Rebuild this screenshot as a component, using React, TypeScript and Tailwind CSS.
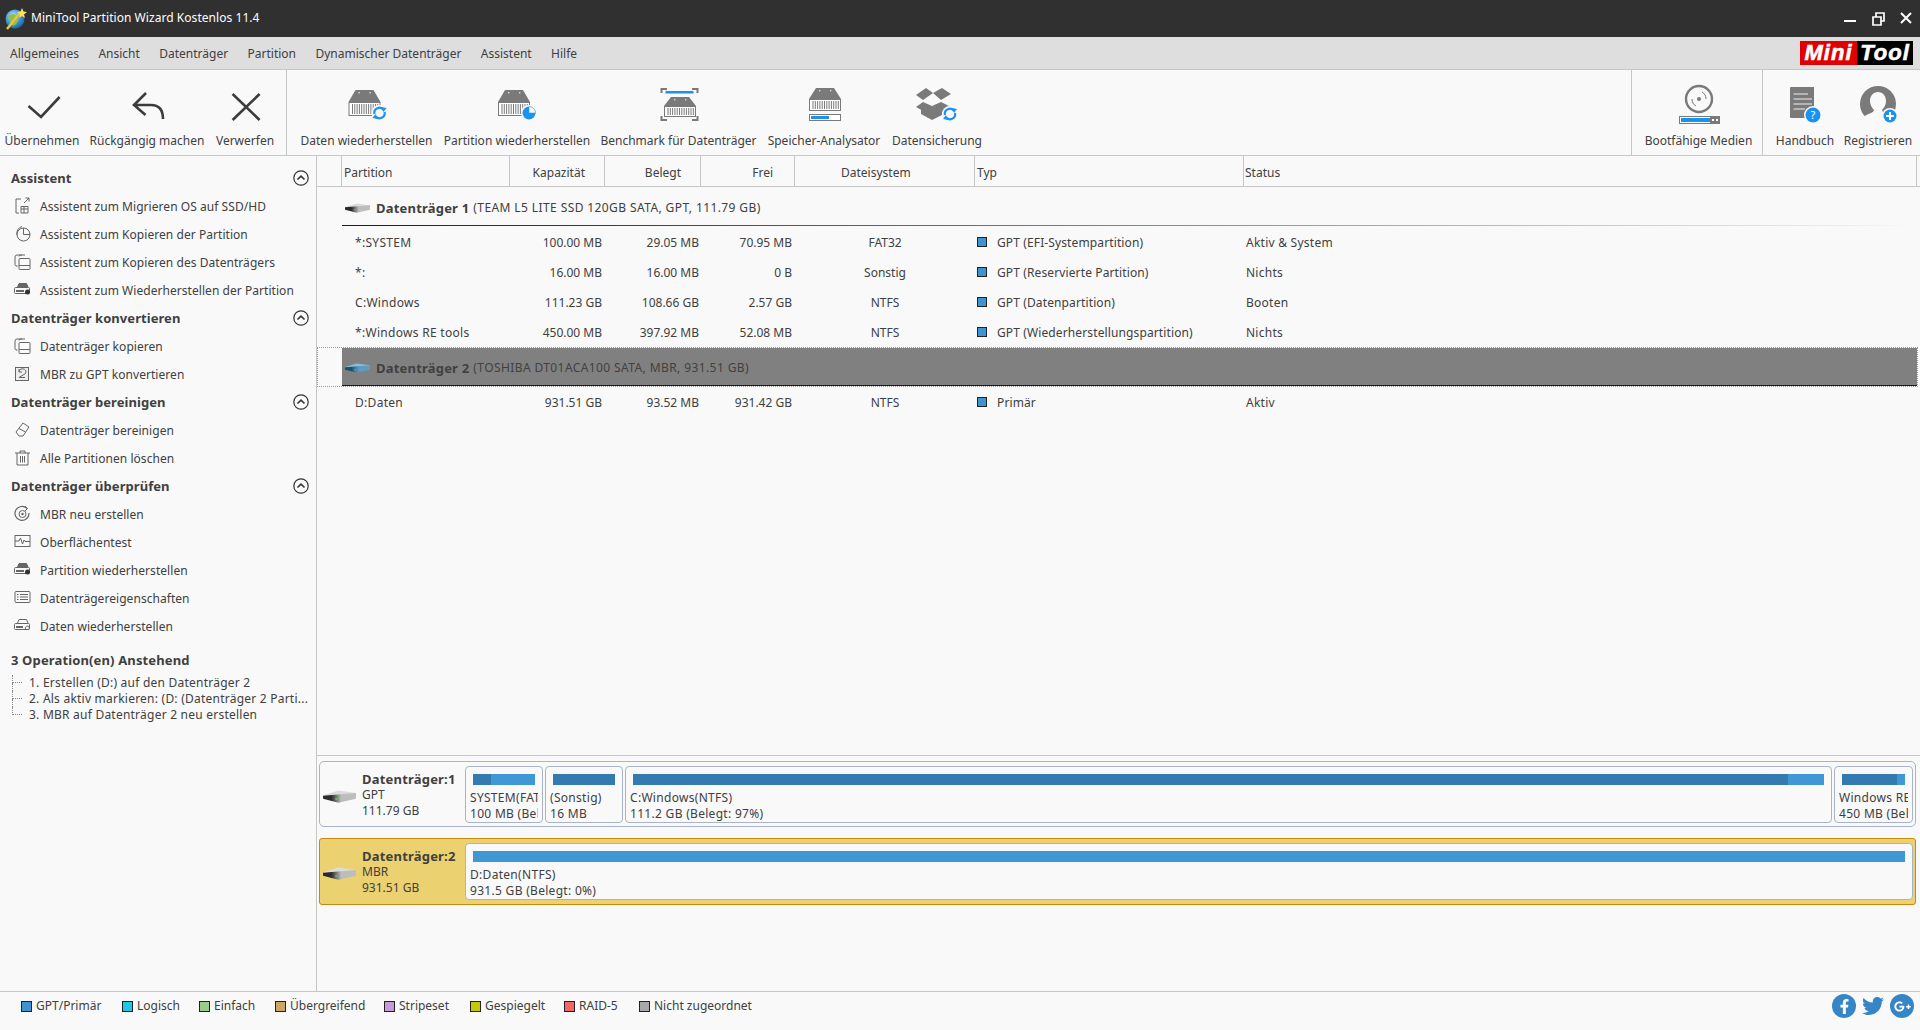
import React from "react";
import { FaFacebookF, FaTwitter, FaGooglePlusG } from "react-icons/fa";

const G = "#7a7a7a";
const BLUE = "#1a93f0";

function Hdd({ x, y, h = 26 }: { x: number; y: number; h?: number }) {
  const top = Math.round(h * 0.46);
  const slats = [];
  for (let i = 0; i < 12; i++) slats.push(<rect key={i} x={3.5 + i * 2.3} y={top + 2} width={1} height={h - top - 4} fill={G} />);
  return (
    <g transform={`translate(${x} ${y})`}>
      <path d={`M7 0H25L32 ${top}H0Z`} fill={G} />
      <rect x={10} y={2} width={1.4} height={1.4} fill="#ddd" />
      <rect x={21} y={2} width={1.4} height={1.4} fill="#ddd" />
      <rect x={0.5} y={top + 0.5} width={31} height={h - top - 1} fill="#fff" stroke={G} />
      {slats}
    </g>
  );
}

function Refresh({ cx, cy }: { cx: number; cy: number }) {
  return (
    <g transform={`translate(${cx} ${cy})`}>
      <circle r={8} fill="#f9f9f9" />
      <path d="M-5 1A5 5 0 0 1 4-3" fill="none" stroke={BLUE} strokeWidth={2.2} />
      <path d="M5 -1A5 5 0 0 1 -4 3" fill="none" stroke={BLUE} strokeWidth={2.2} />
      <path d="M2-6L7-5 4-1Z" fill={BLUE} />
      <path d="M-2 6L-7 5-4 1Z" fill={BLUE} />
    </g>
  );
}

const toolbarIcons: Record<string, React.ReactNode> = {
  check: <polyline points="10.5,20 23,31 41.6,11" fill="none" stroke="#3c3c3c" strokeWidth={2.6} />,
  undo: <path d="M23 7L11 19 22.5 29M11 19H28Q40 19 40 33" fill="none" stroke="#3c3c3c" strokeWidth={2.6} />,
  x: <path d="M11.6 8L38.6 34M38.6 8L11.6 34" stroke="#3c3c3c" strokeWidth={2.6} />,
  data: (<><Hdd x={5.5} y={4} /><Refresh cx={36.5} cy={27} /></>),
  part: (
    <>
      <Hdd x={5} y={4} />
      <circle cx={36} cy={27} r={8} fill="#f9f9f9" />
      <circle cx={36} cy={27} r={6.5} fill={BLUE} />
      <path d="M36 27V20.5A6.5 6.5 0 0 1 42.5 27Z" fill="#f9f9f9" stroke={BLUE} strokeWidth={0.5} />
    </>
  ),
  bench: (
    <>
      <path d="M6.5 7V3H12M37 3H42.5V7M6.5 30V34H12M37 34H42.5V30" fill="none" stroke={G} strokeWidth={2} />
      <rect x={10.5} y={5} width={28} height={2.5} fill={BLUE} />
      <Hdd x={9} y={11} h={20} />
    </>
  ),
  mem: (
    <>
      <Hdd x={9} y={2} h={23} />
      <rect x={9.5} y={28.5} width={31} height={6} fill="#fff" stroke={G} />
      <rect x={11} y={30} width={18} height={3} fill={BLUE} />
    </>
  ),
  box: (
    <>
      <path d="M3 9L13 2 20 7 10 14ZM20 7L29 2 38 8 28 14ZM10 16L3 21 12 26 19 20ZM19 20L30 26 36 20 28 16Z" fill={G} />
      <path d="M10 24L19 28 19 20 ZM8 24V28L19 34 29 29V24L19 20Z" fill={G} />
      <Refresh cx={37} cy={28} />
    </>
  ),
  disc: (
    <>
      <circle cx={24} cy={13} r={13} fill="none" stroke={G} strokeWidth={2.4} />
      <circle cx={24} cy={13} r={2} fill={G} />
      <path d="M27 6A8 8 0 0 1 31 13M21 20A8 8 0 0 1 17 13" fill="none" stroke={G} />
      <rect x={4.5} y={30.5} width={40} height={7} fill="#fff" stroke={G} />
      <rect x={6} y={32} width={29} height={4} fill={BLUE} />
      <rect x={35} y={31} width={9} height={6} fill={G} />
      <rect x={37} y={33} width={2} height={2} fill="#fff" />
      <rect x={41} y={33} width={2} height={2} fill="#fff" />
    </>
  ),
  book: (
    <>
      <path d="M10 1H33V32H10A1 1 0 0 1 9 31V2A1 1 0 0 1 10 1Z" fill={G} />
      <path d="M12.5 8H27M12.5 13H31M12.5 18H31M12.5 23H24" stroke="#eee" strokeWidth={1} />
      <circle cx={32} cy={29} r={9} fill="#f9f9f9" />
      <circle cx={32} cy={29} r={7.5} fill={BLUE} />
      <text x={32} y={33} textAnchor="middle" fontSize={11} fill="#fff" fontFamily="Noto Sans, sans-serif">?</text>
    </>
  ),
  user: (
    <>
      <circle cx={24} cy={18} r={18} fill={G} />
      <path d="M24 6C19 6 16 10 16 15 16 19 18 22 20 24 20 27 12 28 10 31A18 18 0 0 0 38 31C36 28 28 27 28 24 30 22 32 19 32 15 32 10 29 6 24 6Z" fill="#f9f9f9" />
      <circle cx={36} cy={30} r={8} fill="#f9f9f9" />
      <circle cx={36} cy={30} r={6.5} fill={BLUE} />
      <path d="M32 30H40M36 26V34" stroke="#fff" strokeWidth={2} />
    </>
  ),
};

function ToolButton({ icon, label, w }: { icon: string; label: string; w: string }) {
  return (
    <div className={`flex flex-col items-center pt-[16px] ${w}`}>
      <svg width={48} height={36} viewBox="0 0 48 36" className="overflow-visible">{toolbarIcons[icon]}</svg>
      <div className="mt-[11px] h-[16px] whitespace-nowrap">{label}</div>
    </div>
  );
}

const S = "#666";
const sideIcons: Record<string, React.ReactNode> = {
  migrate: (
    <>
      <path d="M7 2H2V16H5" fill="none" stroke={S} />
      <path d="M7 9.5H14V16H7Z M7 12H14 M10 9.5V16" fill="none" stroke={S} />
      <path d="M10 6L15 1M11.5 1H15V4.5" fill="none" stroke={S} />
    </>
  ),
  copyPart: (
    <>
      <circle cx={9.5} cy={9.5} r={6.5} fill="none" stroke={S} />
      <path d="M9.5 9.5V3M9.5 9.5H16" fill="none" stroke={S} />
      <path d="M3 10A7 7 0 0 1 8 1.5" fill="none" stroke={S} />
    </>
  ),
  copyDisk: (
    <>
      <path d="M5 3.5A1.5 1.5 0 0 1 6.5 2H11M2 13H3.5M1 4V11.5Q1 13 2.5 13" fill="none" stroke={S} />
      <path d="M1 4Q1 2 3 2H8" fill="none" stroke={S} />
      <rect x={5} y={5.5} width={11} height={11} rx={1} fill="#f9f9f9" stroke={S} />
      <path d="M5 12.5H16" stroke={S} />
    </>
  ),
  restore: (
    <>
      <path d="M3.5 6L5 2.5H12.5L14 6" fill={S} stroke={S} />
      <rect x={0.5} y={6.5} width={15} height={6} rx={1} fill="#f9f9f9" stroke={S} />
      <rect x={2} y={9} width={8} height={2} fill={S} />
      <circle cx={13.5} cy={11} r={2.5} fill="#333" />
    </>
  ),
  mbr: (
    <>
      <rect x={1.5} y={2.5} width={13} height={13} fill="#eee" stroke={S} />
      <path d="M5 6.5A3.5 3 0 1 1 10 9.5L5 12.5H11M5 4V7H8" fill="none" stroke={S} />
    </>
  ),
  eraser: <path d="M2 11L9 2 15 6 9 15H5ZM5 7.5L11.5 11" fill="none" stroke={S} />,
  trash: (
    <>
      <path d="M1 4H16M6 4V2H11V4" fill="none" stroke={S} />
      <path d="M3 4V16H14V4M6.5 7V13.5M8.5 7V13.5M10.5 7V13.5" fill="none" stroke={S} />
    </>
  ),
  target: (
    <>
      <path d="M13 3.5A7 7 0 1 0 15 8" fill="none" stroke={S} strokeWidth={1.2} />
      <circle cx={8.5} cy={9} r={3.5} fill="none" stroke={S} />
      <circle cx={8.5} cy={9} r={1.2} fill={S} />
      <path d="M11 1L13.5 3.5 11 6" fill="none" stroke={S} />
    </>
  ),
  surface: (
    <>
      <rect x={1} y={2.5} width={15} height={11} fill="none" stroke={S} />
      <path d="M1 8H5L6.5 5 8.5 11 10 7 11 8.5H16" fill="none" stroke={S} />
    </>
  ),
  props: (
    <>
      <rect x={1} y={2.5} width={15} height={11} rx={1} fill="none" stroke={S} />
      <path d="M3 5.5H4.5M6 5.5H14M3 8H4.5M6 8H14M3 10.5H4.5M6 10.5H14" stroke={S} />
    </>
  ),
  dataRec: (
    <>
      <path d="M3.5 6L5 2.5H12.5L14 6" fill="none" stroke={S} />
      <rect x={0.5} y={6.5} width={15} height={6} rx={1} fill="#f9f9f9" stroke={S} />
      <rect x={2} y={9} width={7} height={2} fill={S} />
      <path d="M11.5 12A2 2 0 1 1 14 13" fill="none" stroke={S} />
    </>
  ),
};

function SideItem({ icon, label }: { icon: string; label: string }) {
  return (
    <div className="flex h-[28px] items-center">
      <svg width={17} height={18} viewBox="0 0 17 18" className="ml-[14px] mr-[9px] shrink-0">{sideIcons[icon]}</svg>
      <span className="whitespace-nowrap pt-[2px] tracking-[0.05px]">{label}</span>
    </div>
  );
}

function SideHead({ label }: { label: string }) {
  return (
    <div className="flex h-[28px] items-center justify-between pl-[11px] pr-[7px]">
      <span className="text-[13px] font-bold tracking-[0.06px]">{label}</span>
      <svg width={16} height={16} viewBox="0 0 16 16">
        <circle cx={8} cy={8} r={7.2} fill="none" stroke="#333" strokeWidth={1.2} />
        <path d="M4.5 9.5L8 6.2 11.5 9.5" fill="none" stroke="#333" strokeWidth={1.6} />
      </svg>
    </div>
  );
}

const COLS = "grid grid-cols-[25px_168px_95px_96px_94px_180px_269px_673px]";

function DiskGlyph({ w, blue }: { w: number; blue?: boolean }) {
  const top = blue ? "#8fbbdb" : "#dcdcdc";
  const a = blue ? "#1d4f70" : "#2a2a2a";
  const b = blue ? "#5d9ac4" : "#bdbdbd";
  const id = blue ? "dgb" : "dgg";
  return (
    <svg width={w} height={w * 0.39} viewBox="0 0 32 12.5">
      <defs>
        <linearGradient id={id} x1="0" x2="1" y1="0" y2="0">
          <stop offset="0.25" stopColor={a} />
          <stop offset="0.55" stopColor={b} />
          <stop offset="1" stopColor={b} />
        </linearGradient>
      </defs>
      <path d="M0 5L15 0.5 32 3V5L0 7Z" fill={top} />
      <path d="M0 5.5L32 3V8.5L15 12.5 0 8.5Z" fill={`url(#${id})`} />
      <rect x={12} y={8} width={1.5} height={1.5} fill="#5fd45f" />
    </svg>
  );
}

function DiskHeader({ name, info, selected }: { name: string; info: string; selected?: boolean }) {
  return (
    <div className={selected ? "flex h-[40px] flex-col border border-dotted border-[#e8893a]" : "flex h-[40px] flex-col"}>
      <div className={selected ? "ml-[24px] flex h-full flex-col bg-[#808080]" : "ml-[25px] flex h-full flex-col"}>
        <div className={selected ? "flex flex-1 items-center pl-[3px] pt-[2px]" : "flex flex-1 items-center pl-[3px] pt-[4px]"}>
          <DiskGlyph w={25} blue={selected} />
          <span className="ml-[6px] text-[13px] font-bold tracking-[0.2px]">{name}</span>
          <span className="ml-[4px] whitespace-pre tracking-[0.4px]">{info}</span>
        </div>
        {selected ? (
          <div className="h-px bg-[#14145a]" />
        ) : (
          <div className="mb-px h-px bg-linear-to-r from-[#14145a] to-[#f9f9f9]" />
        )}
      </div>
    </div>
  );
}

function PartRow({ r }: { r: string[] }) {
  return (
    <div className={`${COLS} h-[30px] items-center`}>
      <div />
      <div className="pl-[13px] pt-[2px] tracking-[0.3px]">{r[0]}</div>
      <div className="pr-[3px] pt-[2px] text-right">{r[1]}</div>
      <div className="pr-[2px] pt-[2px] text-right">{r[2]}</div>
      <div className="pr-[3px] pt-[2px] text-right">{r[3]}</div>
      <div className="pt-[2px] text-center">{r[4]}</div>
      <div className="flex items-center pl-[2px]">
        <span className="mr-[10px] h-[10px] w-[10px] border border-[#222] bg-[#3d94d1]" />
        <span className="pt-[2px] tracking-[0.12px]">{r[5]}</span>
      </div>
      <div className="pl-[2px] pt-[2px] tracking-[0.25px]">{r[6]}</div>
    </div>
  );
}

function Block({ a, b, used, w }: { a: string; b: string; used: string; w: string }) {
  return (
    <div className={`flex h-[57px] flex-col rounded-[4px] border border-[#a9b4c8] bg-[#f9f9f9] ${w}`}>
      <div className="mx-[7px] mt-[7px] h-[11px] shrink-0 bg-[#3f98d3]">
        <div className={`h-full bg-[#337ab0] ${used}`} />
      </div>
      <div className="mx-[4px] mt-[5px] overflow-hidden whitespace-nowrap tracking-[0.3px]">
        <div className="h-[16px]">{a}</div>
        <div className="h-[16px]">{b}</div>
      </div>
    </div>
  );
}

function DiskLabel({ a, b, c }: { a: string; b: string; c: string }) {
  return (
    <div className="flex w-[145px] shrink-0 self-stretch">
      <div className="ml-[3px] mt-[28px] w-[39px] shrink-0"><DiskGlyph w={33} /></div>
      <div className="mt-[9px]">
        <div className="h-[16px] text-[13px] font-bold tracking-[0.2px] whitespace-nowrap">{a}</div>
        <div className="h-[16px]">{b}</div>
        <div className="h-[16px]">{c}</div>
      </div>
    </div>
  );
}

const legend: [string, string, string][] = [
  ["GPT/Primär", "bg-[#3d94d1]", "w-[101px]"],
  ["Logisch", "bg-[#22c5e8]", "w-[77px]"],
  ["Einfach", "bg-[#9ccc8a]", "w-[76px]"],
  ["Übergreifend", "bg-[#cda862]", "w-[109px]"],
  ["Stripeset", "bg-[#c79ad8]", "w-[86px]"],
  ["Gespiegelt", "bg-[#c8c800]", "w-[94px]"],
  ["RAID-5", "bg-[#f56565]", "w-[75px]"],
  ["Nicht zugeordnet", "bg-[#a8a8a8]", "w-[130px]"],
];

export default function App() {
  return (
    <div className="flex h-[1030px] w-[1920px] flex-col overflow-hidden bg-[#f9f9f9] text-[12px] leading-4 text-[#404040] [font-family:'Noto_Sans',sans-serif]">
      {/* title bar */}
      <div className="flex h-[37px] shrink-0 items-center justify-between bg-[#303030] text-white">
        <div className="flex items-center pl-[5px]">
          <svg width={23} height={23} viewBox="0 0 23 23">
            <defs>
              <radialGradient id="globe" cx="0.4" cy="0.35" r="0.7">
                <stop offset="0" stopColor="#bfe3ff" />
                <stop offset="0.6" stopColor="#3b8fd8" />
                <stop offset="1" stopColor="#1c5f9e" />
              </radialGradient>
            </defs>
            <circle cx={10} cy={12} r={9.5} fill="url(#globe)" />
            <path d="M3 9Q8 5 12 9T9 19Q5 18 3 9Z" fill="#8cc152" />
            <path d="M2 22L15 6" stroke="#f2c230" strokeWidth={2.4} />
            <path d="M17 1L18.5 4.5 22 5 19 7.5 20 11 17 9 14 11 15 7.5 12 5 15.5 4.5Z" fill="#ffe25a" />
          </svg>
          <span className="mb-[2px] ml-[3px] tracking-[0.05px]">MiniTool Partition Wizard Kostenlos 11.4</span>
        </div>
        <div className="flex items-center pr-[6px]">
          <svg width={70} height={16} viewBox="0 0 70 16" fill="none" stroke="#fff" strokeWidth={2}>
            <path d="M0 10H12" />
            <path d="M29 6H37V14H29ZM32 6V2H40V10H37" strokeWidth={1.7} />
            <path d="M57 2L67 12M67 2L57 12" />
          </svg>
        </div>
      </div>

      {/* menu */}
      <div className="flex h-[33px] shrink-0 items-center justify-between border-b border-[#c6c6c6] bg-[#dedede]">
        <div className="flex gap-[19.4px] pl-[10px] pt-[2px]">
          {["Allgemeines", "Ansicht", "Datenträger", "Partition", "Dynamischer Datenträger", "Assistent", "Hilfe"].map((m) => (
            <span key={m} className="whitespace-nowrap">{m}</span>
          ))}
        </div>
        <div className="mr-[7px] flex h-[24px] w-[113px] text-[22px] font-bold italic leading-[24px] tracking-[1px] text-white [-webkit-text-stroke:0.6px_white] [font-family:'Liberation_Sans',sans-serif]">
          <span className="w-[57px] bg-[#e00000] text-center">Mini</span>
          <span className="w-[56px] bg-black text-center">Tool</span>
        </div>
      </div>

      {/* toolbar */}
      <div className="flex h-[86px] shrink-0 border-b border-[#c6c6c6]">
        <div className="flex w-[287px] border-r border-[#c6c6c6]">
          <ToolButton icon="check" label="Übernehmen" w="w-[84px]" />
          <ToolButton icon="undo" label="Rückgängig machen" w="w-[126px]" />
          <ToolButton icon="x" label="Verwerfen" w="w-[70px]" />
        </div>
        <div className="flex flex-1 pl-[8px]">
          <ToolButton icon="data" label="Daten wiederherstellen" w="w-[143px]" />
          <ToolButton icon="part" label="Partition wiederherstellen" w="w-[158px]" />
          <ToolButton icon="bench" label="Benchmark für Datenträger" w="w-[165px]" />
          <ToolButton icon="mem" label="Speicher-Analysator" w="w-[126px]" />
          <ToolButton icon="box" label="Datensicherung" w="w-[100px]" />
        </div>
        <div className="flex w-[132px] justify-center border-x border-[#c6c6c6] pl-[3px]">
          <ToolButton icon="disc" label="Bootfähige Medien" w="w-[128px]" />
        </div>
        <div className="flex w-[157px]">
          <ToolButton icon="book" label="Handbuch" w="w-[84px]" />
          <ToolButton icon="user" label="Registrieren" w="w-[62px]" />
        </div>
      </div>

      {/* main */}
      <div className="flex min-h-0 flex-1">
        <aside className="w-[317px] shrink-0 border-r border-[#c6c6c6] pt-[8px]">
          <SideHead label="Assistent" />
          <SideItem icon="migrate" label="Assistent zum Migrieren OS auf SSD/HD" />
          <SideItem icon="copyPart" label="Assistent zum Kopieren der Partition" />
          <SideItem icon="copyDisk" label="Assistent zum Kopieren des Datenträgers" />
          <SideItem icon="restore" label="Assistent zum Wiederherstellen der Partition" />
          <SideHead label="Datenträger konvertieren" />
          <SideItem icon="copyDisk" label="Datenträger kopieren" />
          <SideItem icon="mbr" label="MBR zu GPT konvertieren" />
          <SideHead label="Datenträger bereinigen" />
          <SideItem icon="eraser" label="Datenträger bereinigen" />
          <SideItem icon="trash" label="Alle Partitionen löschen" />
          <SideHead label="Datenträger überprüfen" />
          <SideItem icon="target" label="MBR neu erstellen" />
          <SideItem icon="surface" label="Oberflächentest" />
          <SideItem icon="restore" label="Partition wiederherstellen" />
          <SideItem icon="props" label="Datenträgereigenschaften" />
          <SideItem icon="dataRec" label="Daten wiederherstellen" />
          <div className="mt-[6px] pl-[11px]">
            <div className="flex h-[28px] items-center text-[13px] font-bold tracking-[0.14px]">3 Operation(en) Anstehend</div>
            <ul className="mt-[1px] pl-px">
              {["1. Erstellen (D:) auf den Datenträger 2", "2. Als aktiv markieren: (D: (Datenträger 2 Parti...", "3. MBR auf Datenträger 2 neu erstellen"].map((t, i) => (
                <li key={t} className="flex h-[16px] whitespace-nowrap tracking-[0.23px]">
                  <div className="mr-[7px] flex w-[10px] flex-col">
                    <div className="h-[8px] border-b border-l border-dotted border-[#888]" />
                    {i < 2 && <div className="h-[8px] border-l border-dotted border-[#888]" />}
                  </div>
                  {t}
                </li>
              ))}
            </ul>
          </div>
        </aside>

        <section className="flex min-w-0 flex-1 flex-col">
          <div className={`${COLS} h-[31px] shrink-0 border-b border-[#c6c6c6] pt-0 [&>div]:flex [&>div]:items-center [&>div]:border-r [&>div]:border-[#c6c6c6] [&>div]:pt-[4px]`}>
            <div />
            <div className="pl-[2px]">Partition</div>
            <div className="justify-end pr-[19px]">Kapazität</div>
            <div className="justify-end pr-[19px]">Belegt</div>
            <div className="justify-end pr-[21px]">Frei</div>
            <div className="pl-[46px]">Dateisystem</div>
            <div className="pl-[2px]">Typ</div>
            <div className="pl-[1px]">Status</div>
          </div>

          <div className="flex-1 pr-[2px]">
            <DiskHeader name="Datenträger 1" info="(TEAM L5 LITE SSD 120GB SATA, GPT, 111.79 GB)" />
            <PartRow r={["*:SYSTEM", "100.00 MB", "29.05 MB", "70.95 MB", "FAT32", "GPT (EFI-Systempartition)", "Aktiv & System"]} />
            <PartRow r={["*:", "16.00 MB", "16.00 MB", "0 B", "Sonstig", "GPT (Reservierte Partition)", "Nichts"]} />
            <PartRow r={["C:Windows", "111.23 GB", "108.66 GB", "2.57 GB", "NTFS", "GPT (Datenpartition)", "Booten"]} />
            <PartRow r={["*:Windows RE tools", "450.00 MB", "397.92 MB", "52.08 MB", "NTFS", "GPT (Wiederherstellungspartition)", "Nichts"]} />
            <DiskHeader selected name="Datenträger 2" info="(TOSHIBA DT01ACA100 SATA, MBR, 931.51 GB)" />
            <PartRow r={["D:Daten", "931.51 GB", "93.52 MB", "931.42 GB", "NTFS", "Primär", "Aktiv"]} />
          </div>

          <div className="flex h-[236px] shrink-0 flex-col gap-[11px] border-t border-[#c6c6c6] pl-[2px] pr-[4px] pt-[5px]">
            <div className="flex h-[66px] items-center rounded-[5px] border border-[#a9b4c8] pr-[2px]">
              <DiskLabel a="Datenträger:1" b="GPT" c="111.79 GB" />
              <div className="flex flex-1 gap-[2px]">
                <Block a="SYSTEM(FAT32)" b="100 MB (Belegt: 29%)" used="w-[29%]" w="w-[78px] shrink-0" />
                <Block a="(Sonstig)" b="16 MB" used="w-full" w="w-[78px] shrink-0" />
                <Block a="C:Windows(NTFS)" b="111.2 GB (Belegt: 97%)" used="w-[97%]" w="flex-1" />
                <Block a="Windows RE tools(NTFS)" b="450 MB (Belegt: 88%)" used="w-[88%]" w="w-[79px] shrink-0" />
              </div>
            </div>
            <div className="flex h-[67px] items-center rounded-[3px] border border-[#c8890a] bg-[#ebd16f] pr-[2px]">
              <DiskLabel a="Datenträger:2" b="MBR" c="931.51 GB" />
              <div className="flex flex-1">
                <Block a="D:Daten(NTFS)" b="931.5 GB (Belegt: 0%)" used="w-0" w="flex-1" />
              </div>
            </div>
          </div>
        </section>
      </div>

      {/* status */}
      <div className="flex h-[39px] shrink-0 items-start justify-between border-t border-[#c6c6c6] pl-[21px] pr-[6px]">
        <div className="mt-[6px] flex">
          {legend.map(([t, c, w]) => (
            <div key={t} className={`flex items-center whitespace-nowrap ${w}`}>
              <span className={`mr-[4px] h-[11px] w-[11px] border border-[#222] ${c}`} />
              {t}
            </div>
          ))}
        </div>
        <div className="mt-[2px] flex items-center gap-[6px]">
          <span className="flex h-[24px] w-[24px] items-center justify-center rounded-full bg-[#3585c7] text-[15px] text-white"><FaFacebookF /></span>
          <span className="flex h-[24px] w-[22px] items-center justify-center text-[22px] text-[#3585c7]"><FaTwitter /></span>
          <span className="flex h-[24px] w-[24px] items-center justify-center rounded-full bg-[#3585c7] text-[17px] text-white"><FaGooglePlusG /></span>
        </div>
      </div>
    </div>
  );
}
